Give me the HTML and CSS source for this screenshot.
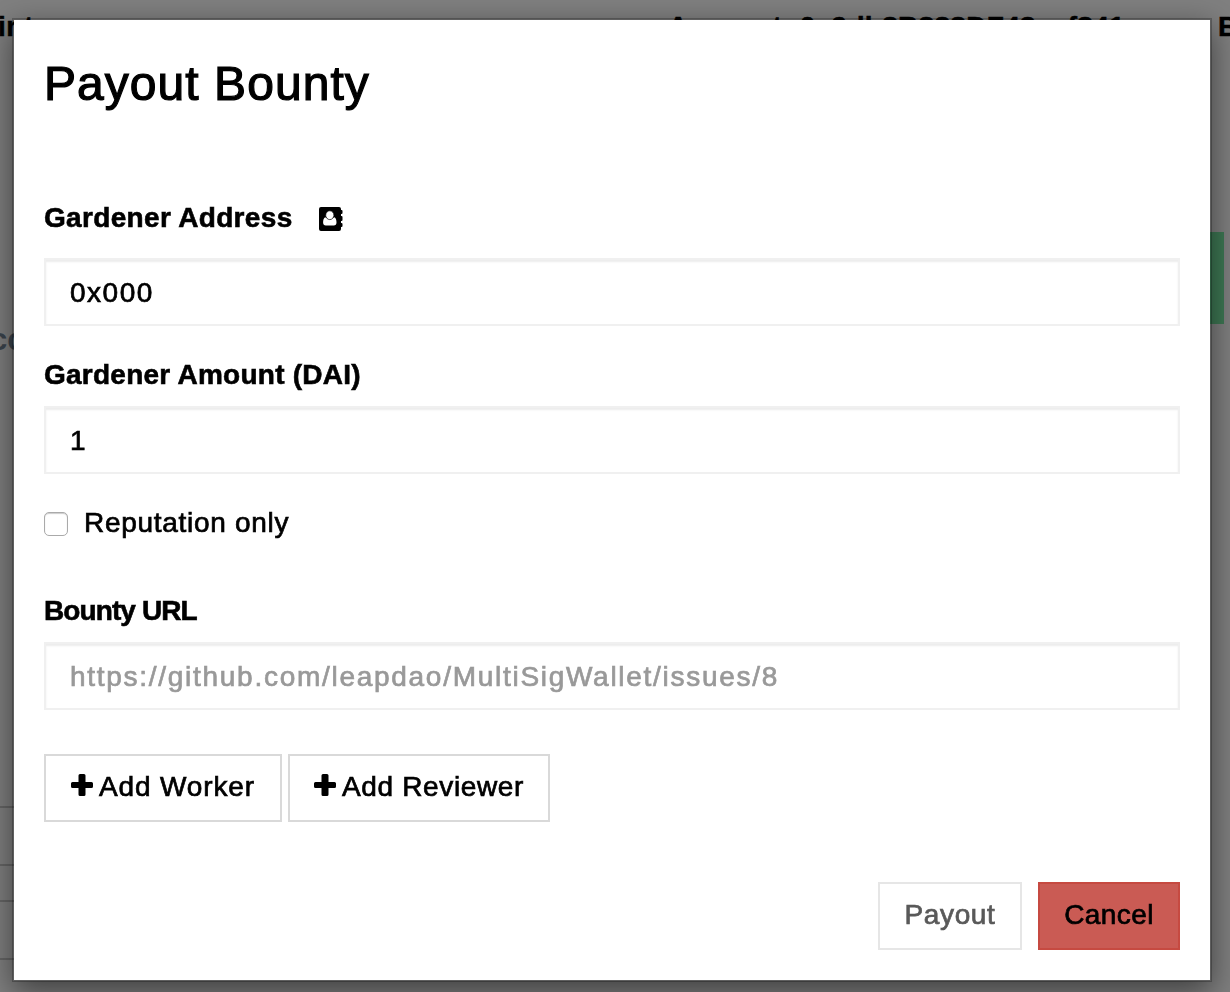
FILE: index.html
```html
<!DOCTYPE html>
<html lang="en">
<head>
<meta charset="utf-8">
<title>Payout Bounty</title>
<link rel="stylesheet" href="styles.css">
</head>
<body>
<div class="page">
  <header class="page-header">
    <span class="col-points">ints</span>
    <span class="col-account">Account: 0x9db8B888DF43ecf841</span>
    <span class="col-balance">B</span>
  </header>
  <div class="page-action"></div>
  <div class="page-note">cc</div>
  <div class="row row-first"></div>
  <div class="row row-second"></div>
</div>
<div class="overlay">
  <section class="modal">
    <h1 class="title">Payout Bounty</h1>
    <div class="label label-address"><span>Gardener Address</span>
      <svg class="book" viewBox="0 0 24 26"><path d="M2 1h18q2 0 2 2v1h.5q1 0 1 1v2q0 1-1 1H22v2h.5q1 0 1 1v3q0 1-1 1H22v2h.5q1 0 1 1v2q0 1-1 1H22v2q0 2-2 2H2q-2 0-2-2V3q0-2 2-2z"/><path fill="#fff" d="M6.200 11.200c1.300.4 2 1.700 4.600 1.700s3.300-1.300 4.600-1.700c1.500.8 2.100 2.600 2.100 5.400 0 1.900-1 2.900-2.700 2.900H6.800c-1.700 0-2.700-1-2.700-2.900 0-2.800.6-4.600 2.100-5.400z"/><ellipse cx="10.800" cy="9.200" rx="4.100" ry="4.400" fill="#fff" stroke="#000" stroke-width=".7"/></svg>
    </div>
    <input class="field field-address" type="text" value="0x000">
    <label class="label label-amount">Gardener Amount (DAI)</label>
    <input class="field field-amount" type="text" value="1">
    <label class="check"><input class="box" type="checkbox"><span>Reputation only</span></label>
    <label class="label label-url">Bounty URL</label>
    <input class="field field-url" type="text" placeholder="https://github.com/leapdao/MultiSigWallet/issues/8">
    <div class="adders">
      <button class="btn btn-worker"><svg class="plus" viewBox="0 0 22 22"><path d="M9 0h4q1.500 0 1.500 1.500V8h6q1.500 0 1.500 1.500v3q0 1.500-1.500 1.500h-6v6.500q0 1.500-1.500 1.500H9q-1.500 0-1.500-1.500V14h-6Q0 14 0 12.500v-3Q0 8 1.500 8h6V1.500Q7.500 0 9 0z"/></svg><span>Add Worker</span></button>
      <button class="btn btn-reviewer"><svg class="plus" viewBox="0 0 22 22"><path d="M9 0h4q1.500 0 1.500 1.500V8h6q1.500 0 1.500 1.500v3q0 1.500-1.500 1.500h-6v6.500q0 1.500-1.500 1.500H9q-1.500 0-1.500-1.500V14h-6Q0 14 0 12.500v-3Q0 8 1.500 8h6V1.500Q7.500 0 9 0z"/></svg><span>Add Reviewer</span></button>
    </div>
    <footer class="footer">
      <button class="btn btn-payout" disabled>Payout</button>
      <button class="btn btn-cancel">Cancel</button>
    </footer>
  </section>
</div>
</body>
</html>
```
FILE: styles.css
```css
* { box-sizing: border-box; }
body {
  margin: 0;
  height: 992px;
  overflow: hidden;
  background: #fff;
  color: #000;
  font: 28px/40px "Liberation Sans", Arial, sans-serif;
}
.page { width: 1230px; height: 992px; overflow: hidden; }
.page-header {
  display: flex;
  height: 232px;
  padding-top: 7px;
  font-weight: 700;
  white-space: nowrap;
  -webkit-text-stroke: 0.5px currentColor;
}
.col-points { width: 670px; flex: none; margin-left: -2px; letter-spacing: 0.5px; }
.col-account { width: 550px; flex: none; letter-spacing: 0.3px; }
.col-balance { flex: none; }
.page-action { width: 100px; height: 92px; margin-left: 1124px; background: #7cf0a8; }
.page-note { height: 482px; margin-left: -10px; line-height: 32px; font-size: 31px; font-weight: 700; color: #75879a; }
.row { width: 1200px; height: 60px; border-top: 2px solid #ccc; border-bottom: 2px solid #ccc; }
.row-second { margin-top: 34px; }

.overlay { position: fixed; inset: 0; padding: 18px 18px 10px 12px; background: rgba(0, 0, 0, 0.5); }
.modal {
  height: 964px;
  padding: 30px;
  border: 2px solid rgba(0, 0, 0, 0.25);
  background: #fff;
  background-clip: padding-box;
  box-shadow: 0 10px 30px rgba(0, 0, 0, 0.5);
  display: flex;
  flex-direction: column;
}
.title {
  margin: 0 0 112px;
  font-size: 48px;
  font-weight: 400;
  line-height: 68px;
  height: 68px;
  letter-spacing: 1.05px;
  -webkit-text-stroke: 1.2px currentColor;
}
.label {
  height: 40px;
  font-weight: 700;
  line-height: 40px;
  letter-spacing: 0.33px;
  white-space: nowrap;
  -webkit-text-stroke: 0.6px currentColor;
}
.title + .label { margin-top: -32px; }
.label-address { display: flex; align-items: center; }
.book { width: 24px; height: 26px; margin: 2px 0 0 26px; }
.field {
  width: 100%;
  height: 68px;
  flex: none;
  padding: 2px 24px 0;
  border: 2px solid #f0f0f0;
  background: #fff;
  box-shadow: inset 0 2px 2px rgba(0, 0, 0, 0.075);
  color: #000;
  font: inherit;
  letter-spacing: 0.6px;
  -webkit-text-stroke: 0.7px currentColor;
  outline: 0;
}
.field::placeholder { color: #999; opacity: 1; }
.field-address { margin-top: 20px; letter-spacing: 1.5px; }
.label-amount { margin-top: 29px; letter-spacing: 0.25px; }
.field-amount { margin-top: 11px; }
.check {
  display: flex;
  align-items: center;
  height: 40px;
  margin-top: 29px;
  letter-spacing: 0.7px;
  -webkit-text-stroke: 0.7px currentColor;
}
.box {
  appearance: none;
  width: 24px;
  height: 24px;
  margin: 2px 16px 0 0;
  border: 1px solid #aaa;
  border-radius: 5px;
  background: #fff;
  box-shadow: inset 0 1px 1px #ccc;
}
.label-url { margin-top: 48px; letter-spacing: -0.9px; }
.field-url { margin-top: 11px; letter-spacing: 1.72px; }
.adders { display: flex; gap: 6px; margin-top: 44px; }
.btn {
  display: flex;
  align-items: center;
  justify-content: center;
  height: 68px;
  padding: 0 0 3px;
  border: 2px solid #d9d9d9;
  background: #fff;
  color: #000;
  font: inherit;
  letter-spacing: 0.65px;
  -webkit-text-stroke: 0.7px currentColor;
}
.plus { width: 22px; height: 22px; margin: 0 6px 3px 0; }
.btn-worker { width: 238px; letter-spacing: 0.85px; }
.btn-reviewer { width: 262px; }
.footer { display: flex; justify-content: flex-end; gap: 16px; margin-top: 60px; }
.btn-payout { width: 144px; border-color: #e6e6e6; color: #595959; }
.btn-cancel { width: 142px; border-color: #c64a41; background: #ca5b54; letter-spacing: 0.4px; }
```
